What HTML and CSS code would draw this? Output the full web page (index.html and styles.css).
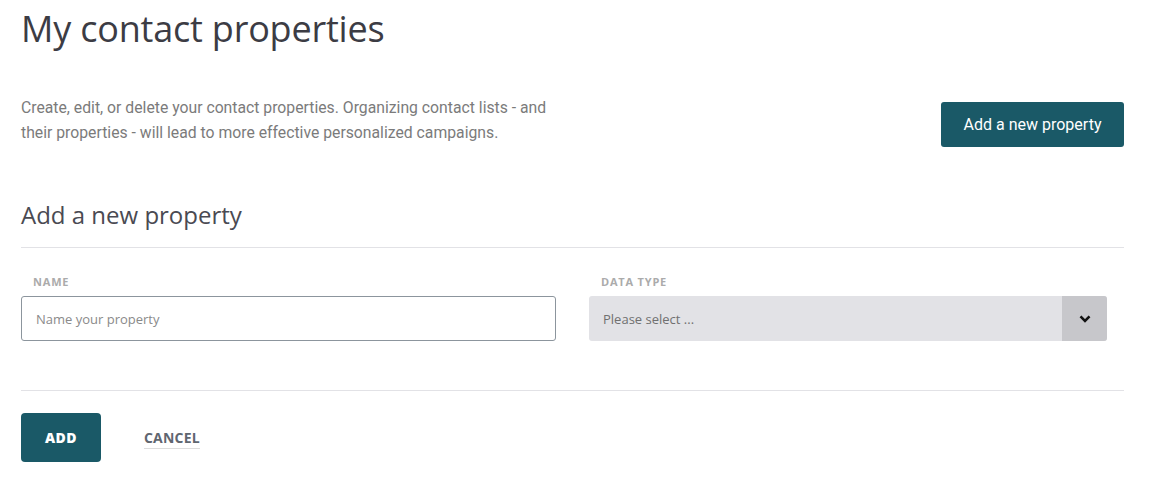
FILE: index.html
```html
<!DOCTYPE html>
<html>
<head>
<meta charset="utf-8">
<link rel="stylesheet" href="styles.css">
</head>
<body>
<div class="page">
  <h1 class="title">My contact properties</h1>
  <div class="intro">
    <p class="desc">Create, edit, or delete your contact properties. Organizing contact lists - and their properties - will lead to more effective personalized campaigns.</p>
    <button class="btn-primary">Add a new property</button>
  </div>
  <h2 class="subtitle">Add a new property</h2>
  <div class="fields">
    <div class="field field-name">
      <label class="label">NAME</label>
      <div class="input">Name your property</div>
    </div>
    <div class="field field-type">
      <label class="label">DATA TYPE</label>
      <div class="select">
        <span class="select-text">Please select ...</span>
        <span class="select-arrow">
          <svg width="12" height="8" viewBox="0 0 12 8"><path d="M1.5 1.3 L6 5.8 L10.5 1.3" fill="none" stroke="#111" stroke-width="2.6"/></svg>
        </span>
      </div>
    </div>
  </div>
  <div class="actions">
    <button class="btn-add">ADD</button>
    <span class="cancel">CANCEL</span>
  </div>
</div>
</body>
</html>
```
FILE: styles.css
```css
* { box-sizing: border-box; }
html, body { margin: 0; padding: 0; background: #fff; }
.page { padding: 0 26px 0 21px; font-family: "Open Sans", sans-serif; }
.title {
  margin: 0;
  padding-top: 4px;
  font-family: "Open Sans", sans-serif;
  font-weight: 500;
  font-size: 36px;
  line-height: 50px;
  color: #3c3c44;
  letter-spacing: -0.2px;
}
.intro {
  display: flex;
  justify-content: space-between;
  align-items: flex-start;
  margin-top: 41px;
}
.desc {
  margin: 0;
  width: 540px;
  font-family: Roboto, sans-serif;
  font-size: 15.75px;
  line-height: 25px;
  color: #7b7b7b;
}
.btn-primary {
  border: 0;
  background: #1a5967;
  color: #fff;
  font-family: Roboto, sans-serif;
  font-size: 16px;
  height: 45px;
  width: 183px;
  border-radius: 3px;
  padding: 0;
  margin-top: 7px;
}
.subtitle {
  margin: 51px 0 0;
  padding-bottom: 15px;
  font-family: "Open Sans", sans-serif;
  font-weight: 400;
  font-size: 24px;
  line-height: 34px;
  color: #4a4a52;
  border-bottom: 1px solid #e2e2e6;
}
.fields {
  display: flex;
  gap: 33px;
  padding-top: 27px;
  padding-bottom: 49px;
  border-bottom: 1px solid #e2e2e6;
}
.field-name { width: 535px; }
.field-type { width: 518px; }
.label {
  display: block;
  font-family: "Open Sans", sans-serif;
  font-weight: 700;
  font-size: 11px;
  line-height: 14px;
  color: #ababab;
  letter-spacing: 0.8px;
  padding-left: 12px;
  margin-bottom: 7px;
}
.input {
  height: 45px;
  border: 1px solid #8c959d;
  border-radius: 3px;
  padding-left: 14px;
  display: flex;
  align-items: center;
  font-size: 13px;
  color: #8a8a8a;
}
.select {
  height: 45px;
  background: #e2e2e6;
  border-radius: 3px;
  display: flex;
  align-items: center;
  overflow: hidden;
}
.select-text {
  flex: 1;
  padding-left: 14px;
  font-size: 13px;
  color: #707070;
}
.select-arrow {
  width: 45px;
  height: 45px;
  background: #c7c7cb;
  display: flex;
  align-items: center;
  justify-content: center;
}
.actions {
  display: flex;
  align-items: center;
  gap: 43px;
  padding-top: 22px;
}
.btn-add {
  border: 0;
  background: #1a5967;
  color: #fff;
  width: 80px;
  height: 49px;
  border-radius: 4px;
  font-family: "Open Sans", sans-serif;
  font-weight: 800;
  font-size: 14px;
  letter-spacing: 0.4px;
  padding: 0;
}
.cancel {
  font-family: "Open Sans", sans-serif;
  font-weight: 700;
  font-size: 14px;
  letter-spacing: 0.2px;
  color: #5f6670;
  border-bottom: 1px solid #dcdcdc;
  padding-bottom: 1px;
  margin-top: 2px;
}
```
